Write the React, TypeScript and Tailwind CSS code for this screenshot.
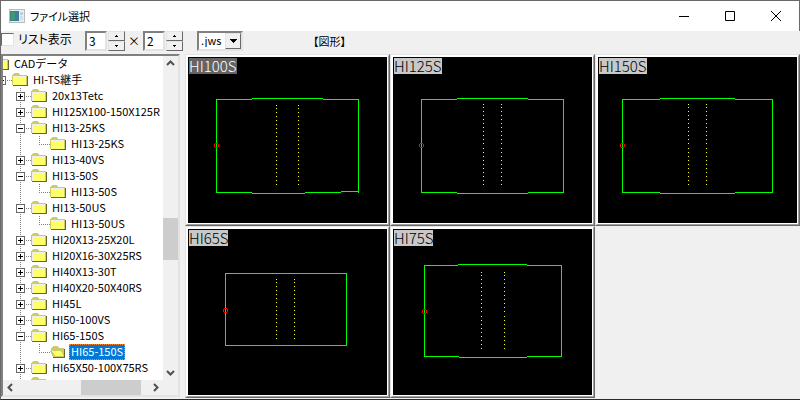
import { useState } from "react";
import clsx from "clsx";

type TreeRow = { level: number; label: string; state?: "plus" | "minus"; open?: boolean };

const rows: TreeRow[] = [
  { level: 0, label: "CADデータ" },
  { level: 1, label: "HI-TS継手", state: "minus" },
  { level: 2, label: "20x13Tetc", state: "plus" },
  { level: 2, label: "HI125X100-150X125R", state: "plus" },
  { level: 2, label: "HI13-25KS", state: "minus" },
  { level: 3, label: "HI13-25KS" },
  { level: 2, label: "HI13-40VS", state: "plus" },
  { level: 2, label: "HI13-50S", state: "minus" },
  { level: 3, label: "HI13-50S" },
  { level: 2, label: "HI13-50US", state: "minus" },
  { level: 3, label: "HI13-50US" },
  { level: 2, label: "HI20X13-25X20L", state: "plus" },
  { level: 2, label: "HI20X16-30X25RS", state: "plus" },
  { level: 2, label: "HI40X13-30T", state: "plus" },
  { level: 2, label: "HI40X20-50X40RS", state: "plus" },
  { level: 2, label: "HI45L", state: "plus" },
  { level: 2, label: "HI50-100VS", state: "plus" },
  { level: 2, label: "HI65-150S", state: "minus" },
  { level: 3, label: "HI65-150S", open: true },
  { level: 2, label: "HI65X50-100X75RS", state: "plus" },
  { level: 2, label: "", state: "plus" },
];

type Figure = {
  name: string;
  outline: string;
  dotX: number[];
  dotY: [number, number][];
  origin: [number, number];
};

const figures: Figure[] = [
  {
    name: "HI100S",
    outline: "M28.5 136V42.5H64M64 41.5H135M135 42.5H170.5V136M28 135.5H64M64 136.5H117M117 135.5H153M153 134.5H171",
    dotX: [88, 110],
    dotY: [[48, 49], [51, 128]],
    origin: [28, 88],
  },
  {
    name: "HI125S",
    outline: "M28.5 136V42.5H64M64 41.5H135M135 42.5H170.5V136M28 135.5H64M64 136.5H135M135 135.5H171",
    dotX: [90, 108],
    dotY: [[47, 48], [50, 87], [91, 128]],
    origin: [28, 88],
  },
  {
    name: "HI150S",
    outline: "M24.5 136V42.5H62M62 41.5H137M137 42.5H174.5V136M24 135.5H62M62 136.5H137M137 135.5H175",
    dotX: [90, 108],
    dotY: [[47, 48], [50, 87], [91, 128]],
    origin: [24, 88],
  },
  {
    name: "HI65S",
    outline: "M37.5 44.5H158.5V116.5H37.5Z",
    dotX: [88, 106],
    dotY: [[50, 51], [53, 110]],
    origin: [37, 81],
  },
  {
    name: "HI75S",
    outline: "M31.5 128V36.5H65M65 35.5H134M134 36.5H168.5V128M31 127.5H66M66 128.5H134M134 127.5H169",
    dotX: [88, 111],
    dotY: [[43, 44], [46, 83], [87, 120]],
    origin: [31, 82],
  },
];

const sunken = "border-2 border-t-[#808080] border-l-[#808080] border-r-[#e3e3e3] border-b-[#e3e3e3]";
const raised = "border border-t-[#e3e3e3] border-l-[#e3e3e3] border-r-[#696969] border-b-[#696969] bg-[#f0f0f0]";

function AppIcon() {
  return (
    <svg width="16" height="14" viewBox="0 0 16 14" className="flex-none" shapeRendering="crispEdges">
      <rect width="16" height="14" fill="#b4bcc4" />
      <rect x="1" y="1" width="14" height="12" fill="#e8edf0" />
      <rect x="1" y="2" width="9" height="10" fill="#3b7f8c" />
      <rect x="2" y="3" width="4" height="8" fill="#3f9a72" />
      <rect x="6" y="3" width="3" height="8" fill="#4478a8" />
      <rect x="11" y="3" width="3" height="3" fill="#c3cdd6" />
      <rect x="11" y="7" width="3" height="4" fill="#d5dce2" />
    </svg>
  );
}

function Folder({ open }: { open?: boolean }) {
  return (
    <svg width="16" height="16" viewBox="0 0 16 16" className="flex-none" shapeRendering="crispEdges">
      {open ? (
        <>
          <path d="M1 4H2V3H3V2H8V3H9V4H14V13H3L1 9Z" fill="#cccc66" />
          <path d="M0 7H1V6H11V7H12V9H13V11H14V13H4V12H3V10H2V9H1V8H0Z" fill="#cccc66" />
          <path d="M2 7H11V8H12V10H13V12H5V11H4V9H3V8H2Z" fill="#ffff66" />
          <path d="M2 7.5H11" stroke="#eeeeee" />
          <path d="M14 5H15V14H3V13H14Z" fill="#666633" />
        </>
      ) : (
        <>
          <path d="M0 3H1V2H2V1H7V2H8V3H15V13H0Z" fill="#cccc66" />
          <rect x="1" y="4" width="13" height="9" fill="#eeeeee" />
          <rect x="2" y="5" width="12" height="8" fill="#ffff66" />
          <path d="M15 4H16V14H1V13H15Z" fill="#666633" />
        </>
      )}
    </svg>
  );
}

function Branch({ kind }: { kind: "plus" | "minus" | "line" | "end" }) {
  return (
    <svg width="19" height="16" viewBox="0 0 19 16" className="flex-none" shapeRendering="crispEdges">
      <path d={kind === "end" ? "M8.5 0V8" : "M8.5 0V16"} stroke="#808080" strokeDasharray="1 1" />
      {kind !== "line" && <path d="M8 8.5H19" stroke="#808080" strokeDasharray="1 1" />}
      {(kind === "plus" || kind === "minus") && (
        <>
          <rect x="4.5" y="4.5" width="8" height="8" fill="#fff" stroke="#696969" />
          <path d={kind === "plus" ? "M6 8.5H11M8.5 6V11" : "M6 8.5H11"} stroke="#000" />
        </>
      )}
    </svg>
  );
}

function Row({ row }: { row: TreeRow }) {
  return (
    <li className="flex h-4 items-center whitespace-nowrap">
      {row.level > 1 && <span className="w-[19px] flex-none" />}
      {row.level > 2 && <Branch kind="line" />}
      {row.level > 0 && <Branch kind={row.state ?? "end"} />}
      <Folder open={row.open} />
      {row.label && (
        <span
          className={clsx(
            "ml-[3px] h-4 px-[2px] leading-[14px]",
            row.open ? "bg-[#0078d7] text-white outline-1 -outline-offset-1 outline-dotted outline-[#ff8728]" : "text-black"
          )}
        >
          {row.label}
        </span>
      )}
    </li>
  );
}

function ScrollArrow({ label, d }: { label: string; d: string }) {
  return (
    <button aria-label={label} className="flex size-[15px] flex-none items-center justify-center">
      <svg width="9" height="9" viewBox="0 0 9 9" fill="none" stroke="#505050" strokeWidth="2">
        <path d={d} />
      </svg>
    </button>
  );
}

function Spinner({ label, initial }: { label: string; initial: number }) {
  const [value, setValue] = useState(initial);
  const btn = clsx(raised, "flex h-[10px] w-[17px] items-center justify-center");
  return (
    <div className="flex gap-px">
      <input
        aria-label={label}
        value={value}
        onChange={(e) => setValue(Number(e.target.value) || 1)}
        className={clsx(sunken, "h-5 w-[22px] bg-white pb-[2px] pl-[2px] text-[12px] leading-[14px] outline-none")}
      />
      <div className="flex flex-col">
        <button aria-label={`${label} +`} className={btn} onClick={() => setValue(value + 1)}>
          <svg width="5" height="3" shapeRendering="crispEdges"><path d="M2 0H3V1H4V2H1V1H2Z" /></svg>
        </button>
        <button aria-label={`${label} -`} className={btn} onClick={() => setValue(Math.max(1, value - 1))}>
          <svg width="5" height="3" shapeRendering="crispEdges"><path d="M1 0H4V1H3V2H2V1H1Z" /></svg>
        </button>
      </div>
    </div>
  );
}

function Preview({ fig, active }: { fig: Figure; active: boolean }) {
  const [cx, cy] = fig.origin;
  return (
    <button className="flex min-h-0 min-w-0 border border-t-[#e3e3e3] border-l-[#e3e3e3] border-r-[#696969] border-b-[#696969]">
      <span className="flex size-full border border-t-white border-l-white border-r-[#a0a0a0] border-b-[#a0a0a0]">
        <span className="relative block size-full border border-white bg-black">
          <svg viewBox="0 0 199 166" className="block size-full" fill="none" shapeRendering="crispEdges">
            <path d={fig.outline} stroke="#00ff00" />
            {fig.dotX.map((x) =>
              fig.dotY.map(([from, to]) => (
                <path key={`${x}-${from}`} d={`M${x}.5 ${from}V${to}`} stroke="#ffff00" strokeDasharray="1 3" />
              ))
            )}
            <circle cx={cx + 0.5} cy={cy + 0.5} r="2" stroke="#ff0000" />
          </svg>
          <span
            className={clsx(
              "absolute top-px left-px h-4 text-[15px] leading-4 font-light",
              active ? "bg-[#646464] text-white" : "bg-[#c8c8c8] text-black"
            )}
          >
            {fig.name}
          </span>
        </span>
      </span>
    </button>
  );
}

export default function App() {
  const [ext, setExt] = useState(".jws");

  return (
    <div className="flex h-screen flex-col border-t border-b border-l border-t-[#696969] border-b-[#2b2b2b] border-l-[#696969] bg-[#f0f0f0] font-['Noto_Sans_CJK_JP',sans-serif] text-[11px] text-black">
      <header className="flex h-[30px] flex-none items-center border-r border-[#696969] bg-white pl-2">
        <AppIcon />
        <h1 className="ml-[5px] flex-1 text-[11px] leading-4 [font-feature-settings:'palt']">ファイル選択</h1>
        <button aria-label="最小化" className="flex h-full w-[46px] items-center justify-center">
          <svg width="10" height="10"><path d="M0 5.5H10" stroke="#000" /></svg>
        </button>
        <button aria-label="最大化" className="flex h-full w-[46px] items-center justify-center">
          <svg width="10" height="10" fill="none"><path d="M.5 .5H9.5V9.5H.5Z" stroke="#000" /></svg>
        </button>
        <button aria-label="閉じる" className="flex h-full w-[46px] items-center justify-center">
          <svg width="10" height="10"><path d="M0 0L10 10M10 0L0 10" stroke="#000" /></svg>
        </button>
      </header>

      <div className="flex h-[23px] flex-none items-start">
        <label className="flex w-[84px] items-center gap-1 text-[12px] leading-4 [font-feature-settings:'palt']">
          <input
            type="checkbox"
            className="size-[13px] flex-none appearance-none border border-t-[#696969] border-r-[#e3e3e3] border-b-[#e3e3e3] border-l-[#696969] bg-white"
          />
          リスト表示
        </label>
        <Spinner label="列数" initial={3} />
        <span className="w-[18px] text-center text-[12px] leading-5">×</span>
        <Spinner label="行数" initial={2} />
        <div className="relative ml-[14px]">
          <select
            aria-label="拡張子"
            value={ext}
            onChange={(e) => setExt(e.target.value)}
            className={clsx(sunken, "block h-5 w-[46px] appearance-none bg-white pb-[2px] pl-[2px] text-[11px] leading-[14px]")}
          >
            <option>.jws</option>
            <option>.jwk</option>
          </select>
          <span className={clsx(raised, "pointer-events-none absolute top-[2px] right-[2px] flex h-4 w-4 items-center justify-center")}>
            <svg width="7" height="4" shapeRendering="crispEdges"><path d="M0 0H7V1H6V2H5V3H4V4H3V3H2V2H1V1H0Z" /></svg>
          </span>
        </div>
        <span className="ml-[70px] text-[11px] leading-5 [font-feature-settings:'palt']">【図形】</span>
      </div>

      <main className="flex min-h-0 flex-1 pb-px">
        <aside className="w-[184px] flex-none pr-[5px] pb-px">
          <div className={clsx(sunken, "flex h-full flex-col")}>
            <div className="flex min-h-0 flex-1">
              <ul className="min-w-0 flex-1 overflow-hidden bg-white *:-ml-[10px]">
                {rows.map((row, i) => (
                  <Row key={i} row={row} />
                ))}
              </ul>
              <div className="flex w-[15px] flex-none flex-col">
                <ScrollArrow label="上へ" d="M1 6L4.5 2.5L8 6" />
                <div className="flex flex-1 flex-col">
                  <div className="flex-[147]" />
                  <div className="flex-[42] bg-[#cdcdcd]" />
                  <div className="flex-[105]" />
                </div>
                <ScrollArrow label="下へ" d="M1 3L4.5 6.5L8 3" />
              </div>
            </div>
            <div className="flex h-[15px] flex-none pr-[15px]">
              <ScrollArrow label="左へ" d="M6 1L2.5 4.5L6 8" />
              <div className="flex flex-1">
                <div className="flex-[63]" />
                <div className="flex-[60] bg-[#cdcdcd]" />
                <div className="flex-[7]" />
              </div>
              <ScrollArrow label="右へ" d="M3 1L6.5 4.5L3 8" />
            </div>
          </div>
        </aside>
        <section className="grid min-w-0 flex-1 grid-cols-3 grid-rows-2">
          {figures.map((fig, i) => (
            <Preview key={fig.name} fig={fig} active={i === 0} />
          ))}
        </section>
      </main>
    </div>
  );
}
